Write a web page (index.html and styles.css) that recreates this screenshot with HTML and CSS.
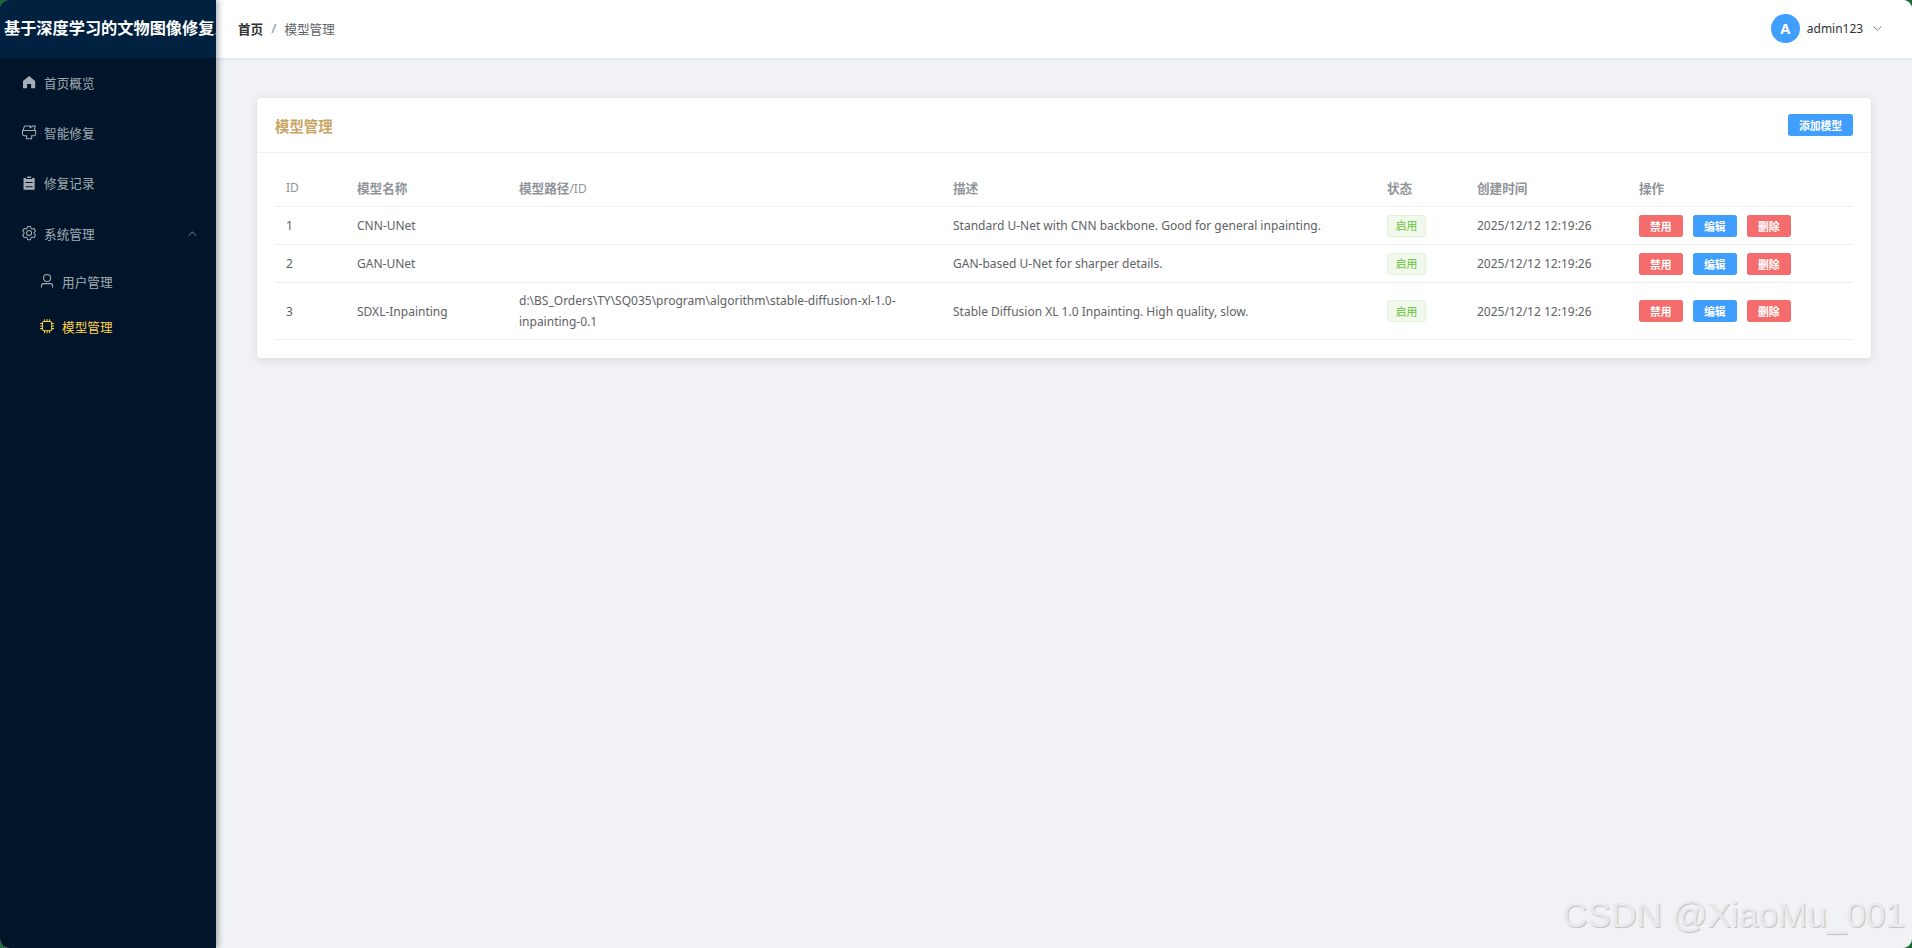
FILE: index.html
```html
<!DOCTYPE html>
<html lang="zh-CN">
<head>
<meta charset="utf-8">
<title>模型管理</title>
<link rel="stylesheet" href="styles.css">
</head>
<body>
<div class="app">
  <aside class="sidebar">
    <div class="logo">基于深度学习的文物图像修复系统</div>
    <nav class="menu">
      <a class="item"><span class="ico"><svg viewBox="0 0 1024 1024"><path d="M512 128 128 447.936V896h255.936V640H640v256h255.936V447.936z"/></svg></span>首页概览</a>
      <a class="item"><span class="ico"><svg viewBox="0 0 1024 1024"><path d="M896 448H128v192a64 64 0 0 0 64 64h192v192h256V704h192a64 64 0 0 0 64-64zm-770.752-64c0-47.552 5.248-90.24 15.552-128 14.72-54.016 42.496-107.392 83.2-160h417.28l-15.36 70.336L736 96h211.2c-24.832 42.88-41.92 96.256-51.2 160a663.872 663.872 0 0 0-6.144 128H960v256a128 128 0 0 1-128 128H704v160a32 32 0 0 1-32 32H352a32 32 0 0 1-32-32V768H192A128 128 0 0 1 64 640V384h61.248zm64 0h636.544c-2.048-45.824.256-91.584 6.848-137.216 4.48-30.848 10.688-59.776 18.688-86.784h-96.64l-221.12 141.248L561.92 160H256.512c-25.856 37.888-43.776 75.456-53.952 112.832-8.768 32.064-13.248 69.12-13.312 111.168"/></svg></span>智能修复</a>
      <a class="item"><span class="ico"><svg viewBox="0 0 1024 1024"><path d="M704 192h160v736H160V192h160v64h384zM288 512h448v-64H288zm0 256h448v-64H288zm96-576V96h256v96z"/></svg></span>修复记录</a>
      <a class="item"><span class="ico"><svg viewBox="0 0 1024 1024"><path d="M600.704 64a32 32 0 0 1 30.464 22.208l35.2 109.376c14.784 7.232 28.928 15.36 42.432 24.512l112.384-24.192a32 32 0 0 1 34.432 15.36L944.32 364.8a32 32 0 0 1-4.032 37.504l-77.12 85.12a357.12 357.12 0 0 1 0 49.024l77.12 85.248a32 32 0 0 1 4.032 37.504l-88.704 153.6a32 32 0 0 1-34.432 15.296L708.8 803.904c-13.44 9.088-27.648 17.28-42.368 24.512l-35.264 109.376A32 32 0 0 1 600.704 960H423.296a32 32 0 0 1-30.464-22.208L357.696 828.48a351.616 351.616 0 0 1-42.56-24.64l-112.32 24.256a32 32 0 0 1-34.432-15.36L79.68 659.2a32 32 0 0 1 4.032-37.504l77.12-85.248a357.12 357.12 0 0 1 0-48.896l-77.12-85.248A32 32 0 0 1 79.68 364.8l88.704-153.6a32 32 0 0 1 34.432-15.296l112.32 24.256c13.568-9.152 27.776-17.408 42.56-24.64l35.2-109.312A32 32 0 0 1 423.232 64H600.64zm-23.424 64H446.72l-36.352 113.088-24.512 11.968a294.113 294.113 0 0 0-34.816 20.096l-22.656 15.36-116.224-25.088-65.28 113.152 79.68 88.192-1.92 27.136a293.12 293.12 0 0 0 0 40.192l1.92 27.136-79.808 88.192 65.344 113.152 116.224-25.024 22.656 15.296a294.113 294.113 0 0 0 34.816 20.096l24.512 11.968L446.72 896h130.688l36.48-113.152 24.448-11.904a288.282 288.282 0 0 0 34.752-20.096l22.592-15.296 116.288 25.024 65.28-113.152-79.744-88.192 1.92-27.136a293.12 293.12 0 0 0 0-40.256l-1.92-27.136 79.808-88.128-65.344-113.152-116.288 24.96-22.592-15.232a287.616 287.616 0 0 0-34.752-20.096l-24.448-11.904L577.344 128zM512 320a192 192 0 1 1 0 384 192 192 0 0 1 0-384m0 64a128 128 0 1 0 0 256 128 128 0 0 0 0-256"/></svg></span>系统管理<svg class="caret" viewBox="0 0 1024 1024"><path d="m488.832 344.32-339.84 356.672a32 32 0 0 0 0 44.16l.384.384a29.44 29.44 0 0 0 42.688 0l320-335.872 319.872 335.872a29.44 29.44 0 0 0 42.688 0l.384-.384a32 32 0 0 0 0-44.16L535.168 344.32a32 32 0 0 0-46.336 0z"/></svg></a>
      <a class="item sub"><span class="ico"><svg viewBox="0 0 1024 1024"><path d="M512 512a192 192 0 1 0 0-384 192 192 0 0 0 0 384m0 64a256 256 0 1 1 0-512 256 256 0 0 1 0 512m320 320v-96a96 96 0 0 0-96-96H288a96 96 0 0 0-96 96v96a32 32 0 1 1-64 0v-96a160 160 0 0 1 160-160h448a160 160 0 0 1 160 160v96a32 32 0 1 1-64 0"/></svg></span>用户管理</a>
      <a class="item sub active"><span class="ico"><svg viewBox="0 0 1024 1024"><path d="M320 256a64 64 0 0 0-64 64v384a64 64 0 0 0 64 64h384a64 64 0 0 0 64-64V320a64 64 0 0 0-64-64zm0-64h384a128 128 0 0 1 128 128v384a128 128 0 0 1-128 128H320a128 128 0 0 1-128-128V320a128 128 0 0 1 128-128"/><path d="M512 64a32 32 0 0 1 32 32v128h-64V96a32 32 0 0 1 32-32m160 0a32 32 0 0 1 32 32v128h-64V96a32 32 0 0 1 32-32m-320 0a32 32 0 0 1 32 32v128h-64V96a32 32 0 0 1 32-32m160 896a32 32 0 0 1-32-32V800h64v128a32 32 0 0 1-32 32m160 0a32 32 0 0 1-32-32V800h64v128a32 32 0 0 1-32 32m-320 0a32 32 0 0 1-32-32V800h64v128a32 32 0 0 1-32 32M64 512a32 32 0 0 1 32-32h128v64H96a32 32 0 0 1-32-32m0-160a32 32 0 0 1 32-32h128v64H96a32 32 0 0 1-32-32m0 320a32 32 0 0 1 32-32h128v64H96a32 32 0 0 1-32-32m896-160a32 32 0 0 1-32 32H800v-64h128a32 32 0 0 1 32 32m0-160a32 32 0 0 1-32 32H800v-64h128a32 32 0 0 1 32 32m0 320a32 32 0 0 1-32 32H800v-64h128a32 32 0 0 1 32 32"/></svg></span>模型管理</a>
    </nav>
  </aside>
  <div class="content">
    <header class="topbar">
      <div class="crumbs"><b class="crumb-home">首页</b><span class="crumb-sep">/</span><span class="crumb-cur">模型管理</span></div>
      <div class="user">
        <span class="avatar">A</span>
        <span class="uname">admin123</span>
        <svg class="user-caret" viewBox="0 0 1024 1024"><path d="M831.872 340.864 512 652.672 192.128 340.864a30.592 30.592 0 0 0-42.752 0 29.12 29.12 0 0 0 0 41.6L489.664 714.24a32 32 0 0 0 44.672 0l340.288-331.712a29.12 29.12 0 0 0 0-41.6 30.592 30.592 0 0 0-42.752 0z"/></svg>
      </div>
    </header>
    <main class="main">
      <section class="card">
        <div class="card-head">
          <h2 class="card-title">模型管理</h2>
          <button class="btn primary add">添加模型</button>
        </div>
        <div class="card-body">
          <table class="tbl">
            <colgroup>
              <col class="c-id"><col class="c-name"><col class="c-path"><col class="c-desc"><col class="c-state"><col class="c-time"><col class="c-ops">
            </colgroup>
            <thead>
              <tr><th><span class="lat">ID</span></th><th>模型名称</th><th>模型路径<span class="lat">/ID</span></th><th>描述</th><th>状态</th><th>创建时间</th><th>操作</th></tr>
            </thead>
            <tbody>
              <tr>
                <td>1</td><td>CNN-UNet</td><td></td>
                <td>Standard U-Net with CNN backbone. Good for general inpainting.</td>
                <td><span class="tag">启用</span></td>
                <td>2025/12/12 12:19:26</td>
                <td><div class="ops"><button class="btn danger">禁用</button><button class="btn primary">编辑</button><button class="btn danger">删除</button></div></td>
              </tr>
              <tr>
                <td>2</td><td>GAN-UNet</td><td></td>
                <td>GAN-based U-Net for sharper details.</td>
                <td><span class="tag">启用</span></td>
                <td>2025/12/12 12:19:26</td>
                <td><div class="ops"><button class="btn danger">禁用</button><button class="btn primary">编辑</button><button class="btn danger">删除</button></div></td>
              </tr>
              <tr>
                <td>3</td><td>SDXL-Inpainting</td>
                <td>d:\BS_Orders\TY\SQ035\program\algorithm\stable-diffusion-xl-1.0-inpainting-0.1</td>
                <td>Stable Diffusion XL 1.0 Inpainting. High quality, slow.</td>
                <td><span class="tag">启用</span></td>
                <td>2025/12/12 12:19:26</td>
                <td><div class="ops"><button class="btn danger">禁用</button><button class="btn primary">编辑</button><button class="btn danger">删除</button></div></td>
              </tr>
            </tbody>
          </table>
        </div>
      </section>
    </main>
  </div>
  <div class="watermark">CSDN @XiaoMu_001</div>
</div>
</body>
</html>
```
FILE: styles.css
```css
* { box-sizing: border-box; }
html, body { margin: 0; height: 100%; }
body {
  background: #1a6a33;
  font-family: "Noto Sans", "Noto Sans CJK SC", sans-serif;
  font-size: 12.6px;
  overflow: hidden;
}
.app {
  position: relative;
  display: flex;
  width: 1912px;
  height: 948px;
  border-radius: 9px;
  overflow: hidden;
  background: #f0f2f5;
}
.sidebar {
  flex: 0 0 216px;
  width: 216px;
  min-width: 0;
  background: #001529;
  box-shadow: 2px 0 6px rgba(0, 21, 41, .35);
  position: relative;
  z-index: 2;
}
.logo {
  height: 58px;
  line-height: 56px;
  padding-left: 4px;
  background: #002140;
  color: #fff;
  font-size: 16.2px;
  font-weight: 700;
  white-space: nowrap;
  overflow: hidden;
}
.menu { display: flex; flex-direction: column; }
.item {
  display: flex;
  align-items: center;
  height: 50.4px;
  padding-left: 18px;
  padding-bottom: 2px;
  color: rgba(255, 255, 255, .65);
  position: relative;
}
.item.sub { height: 45px; padding-left: 36px; }
.item.active { color: #ffd04b; }
.ico {
  flex: 0 0 21.6px;
  margin-right: 4.5px;
  display: flex;
  justify-content: center;
}
.ico svg { width: 16.2px; height: 16.2px; fill: currentColor; }
.caret { width: 10.8px; height: 10.8px; fill: currentColor; margin-left: auto; margin-right: 18px; }
.content { flex: 1; min-width: 0; display: flex; flex-direction: column; }
.topbar {
  height: 58px;
  background: #fff;
  box-shadow: 0 1px 4px rgba(0, 21, 41, .08);
  display: flex;
  align-items: center;
  justify-content: space-between;
  padding: 0 29px 2px 22px;
  position: relative;
  z-index: 1;
}
.crumbs { display: flex; align-items: center; }
.crumb-home { color: #303133; font-weight: 700; }
.crumb-sep { color: #a8abb2; margin: 0 8px; font-weight: 700; }
.crumb-cur { color: #606266; }
.user { display: flex; align-items: center; color: #606266; }
.avatar {
  width: 29px;
  height: 29px;
  border-radius: 50%;
  background: #409eff;
  color: #fff;
  font-size: 14.4px;
  font-weight: 700;
  display: flex;
  align-items: center;
  justify-content: center;
  margin-right: 7px;
}
.uname { color: #303133; font-size: 12px; }
.user-caret { width: 10.8px; height: 10.8px; fill: #606266; margin-left: 9px; }
.main { flex: 1; padding: 40px 41px; }
.card {
  background: #fff;
  border-radius: 3.6px;
  box-shadow: 0 2px 11px rgba(0, 0, 0, .1);
}
.card-head {
  height: 55px;
  padding: 0 18px;
  border-bottom: 1px solid #ebeef5;
  display: flex;
  align-items: center;
  justify-content: space-between;
}
.card-title { margin: 0; font-size: 14.4px; font-weight: 700; color: #c8a562; }
.card-body { padding: 18px; }
.tbl { width: 100%; table-layout: fixed; border-collapse: separate; border-spacing: 0; color: #606266; }
.c-id { width: 71px; }
.c-name { width: 162px; }
.c-path { width: 434px; }
.c-desc { width: 434px; }
.c-state { width: 90px; }
.c-time { width: 162px; }
.tbl th {
  height: 36px;
  padding: 0 11px 2px;
  text-align: left;
  color: #909399;
  font-weight: 700;
  border-bottom: 1px solid #ebeef5;
}
.lat { font-size: 12px; font-weight: 400; }
.tbl td {
  height: 38px;
  padding: 7px 11px;
  font-size: 12px;
  line-height: 21px;
  border-bottom: 1px solid #ebeef5;
}
.tag {
  display: inline-flex;
  align-items: center;
  justify-content: center;
  height: 22px;
  width: 39px;
  background: #f0f9eb;
  border: 1px solid #e1f3d8;
  border-radius: 3px;
  color: #67c23a;
  font-size: 10.8px;
  vertical-align: middle;
}
.ops { display: flex; gap: 10.5px; align-items: center; }
.btn {
  height: 22px;
  width: 43.5px;
  padding: 0;
  border: 0;
  border-radius: 2.7px;
  font-family: inherit;
  font-size: 10.8px;
  font-weight: 700;
  color: #fff;
}
.btn.add { width: 65px; }
.primary { background: #409eff; }
.danger { background: #f56c6c; }
.watermark {
  position: absolute;
  right: 7px;
  bottom: 15px;
  font-family: "Liberation Sans", sans-serif;
  font-size: 35.2px;
  line-height: 36px;
  color: #e8eaed;
  text-shadow: 1px 1px 1px #bfc0c3;
  z-index: 3;
}
```
